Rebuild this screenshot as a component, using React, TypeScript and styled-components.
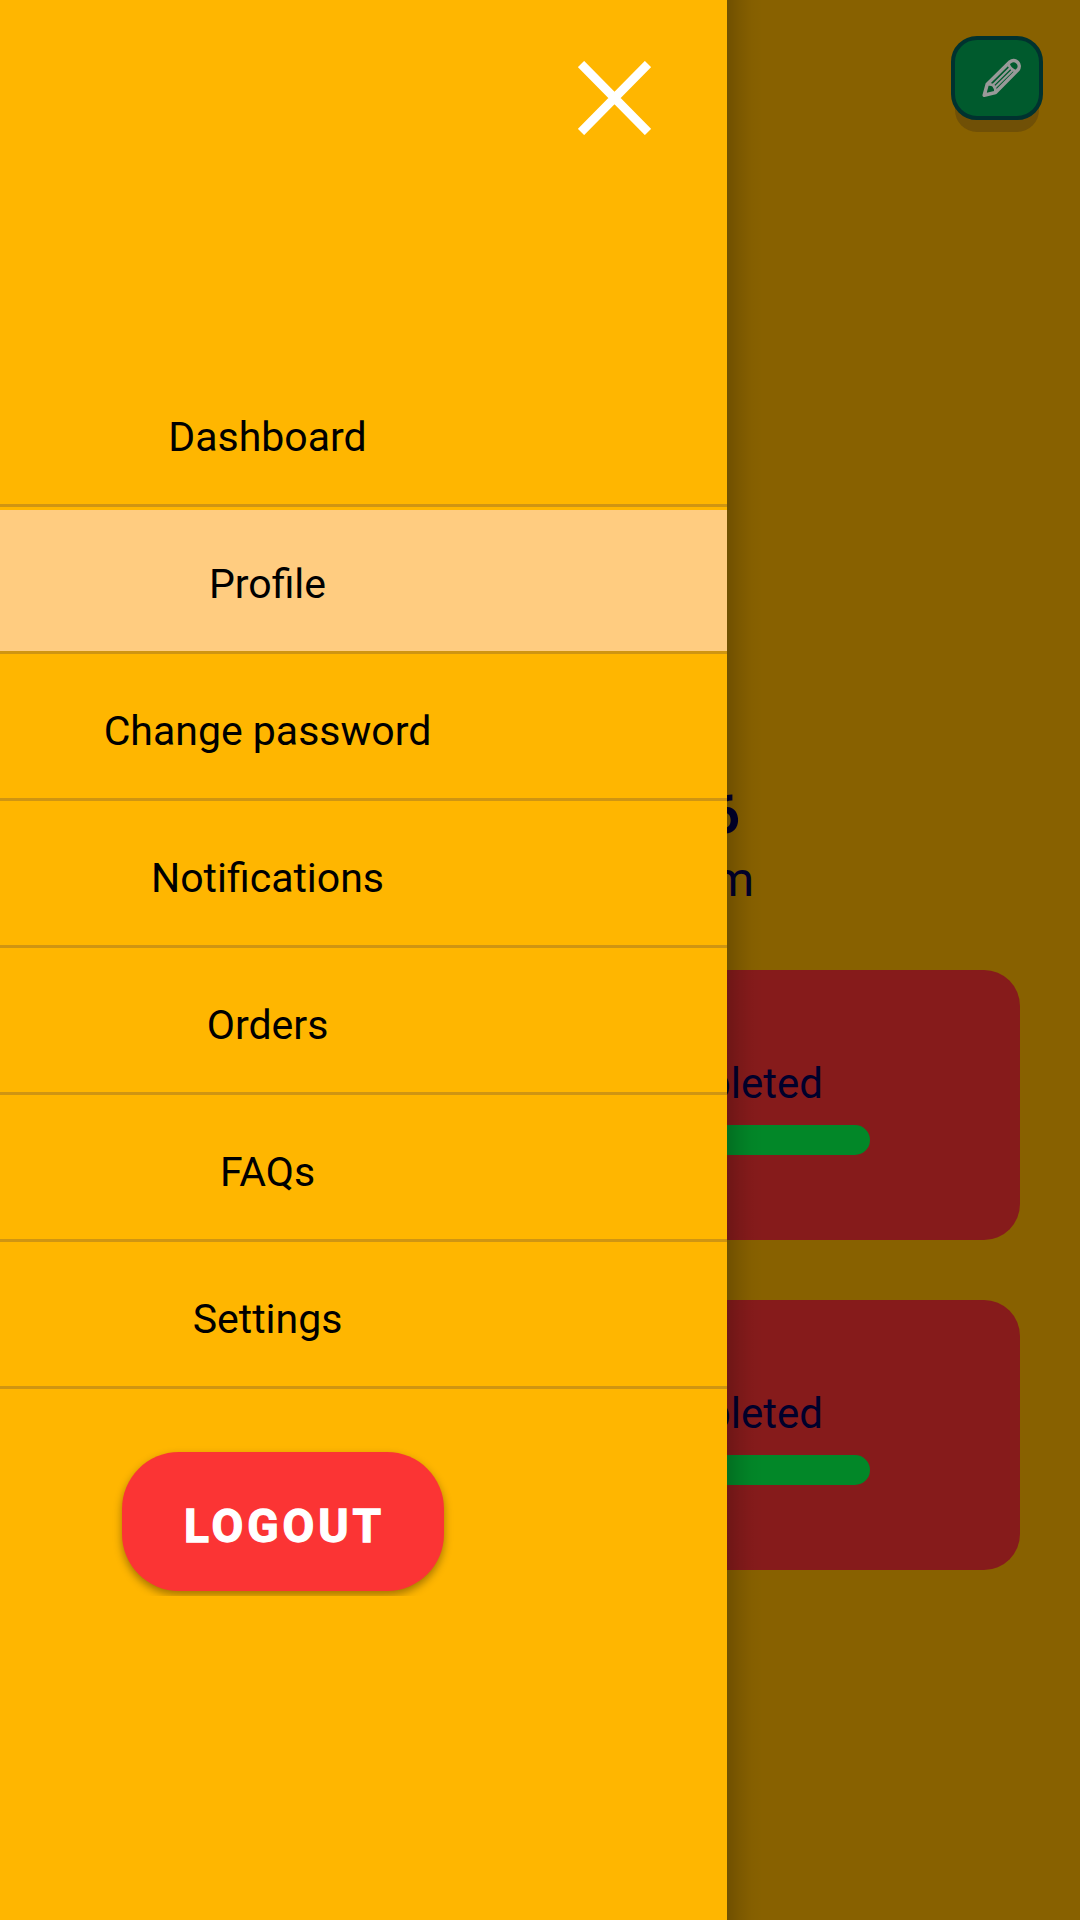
import React from "react";
import styled, { createGlobalStyle } from "styled-components";

const GlobalStyle = createGlobalStyle`
  * { box-sizing: border-box; }
  body { margin: 0; background: #886100; font-family: Roboto, "Liberation Sans", sans-serif; }
  button { font-family: inherit; border: 0; padding: 0; cursor: pointer; }
`;

const Screen = styled.div`
  position: relative;
  width: 1080px;
  height: 1920px;
  overflow: hidden;
  background: #886100;
`;

const Page = styled.main`
  display: flex;
  flex-direction: column;
  height: 100%;
  padding: 36px 37px 0 60px;
  color: #00002b;
`;

const EditButton = styled.button`
  align-self: flex-end;
  display: flex;
  align-items: center;
  justify-content: center;
  width: 92px;
  height: 84px;
  padding-left: 9px;
  border: 4px solid #00322f;
  border-radius: 26px;
  background: #005a2d;
  box-shadow: 0 16px 0 -4px #705006;
`;

const Identity = styled.section`
  display: flex;
  flex-direction: column;
  margin-top: 663px;
  height: 187px;
`;

const Name = styled.div`
  width: 680px;
  line-height: 65px;
  font-size: 53px;
  font-weight: 700;
  text-align: right;
`;

const Email = styled.div`
  width: 694px;
  line-height: 64px;
  font-size: 48px;
  text-align: right;
`;

const Cards = styled.section`
  display: flex;
  flex-direction: column;
  gap: 60px;
  width: 960px;
`;

const Card = styled.article`
  height: 270px;
  padding: 89px 150px 0;
  border-radius: 36px;
  background: #861b1b;
`;

const CardLabel = styled.div`
  width: 613px;
  height: 66px;
  line-height: 50px;
  font-size: 42px;
  text-align: right;
`;

const Progress = styled.div`
  height: 30px;
  border-radius: 15px;
  background: #028728;
`;

const Drawer = styled.aside`
  position: absolute;
  inset: 0 auto 0 0;
  display: flex;
  flex-direction: column;
  width: 727px;
  background: #ffb600;

  &::after {
    content: "";
    position: absolute;
    inset: 0 -36px 0 auto;
    width: 36px;
    background: linear-gradient(
      90deg,
      rgba(0, 0, 0, 0.18),
      rgba(0, 0, 0, 0.09) 35%,
      rgba(0, 0, 0, 0.025) 68%,
      transparent
    );
  }
`;

const DrawerHeader = styled.header`
  display: flex;
  justify-content: flex-end;
  height: 360px;
  padding: 61px 76px 0 0;
`;

const CloseButton = styled.button`
  width: 73px;
  height: 74px;
  background: none;
  svg { display: block; }
`;

const Menu = styled.nav`
  display: flex;
  flex-direction: column;
`;

const MenuItem = styled.a<{ $active?: boolean }>`
  display: flex;
  align-items: center;
  justify-content: center;
  height: 144px;
  margin-top: 3px;
  padding: 6px 192px 0 0;
  border-bottom: 3px solid #cf9512;
  background: ${(p) => (p.$active ? "#ffcc80" : "transparent")};
  color: #000;
  font-size: 41px;
`;

const LogoutClip = styled.div`
  width: 360px;
  height: 151px;
  margin: 56px 0 0 102px;
  padding: 7px 18px 0 20px;
  overflow: hidden;
`;

const LogoutButton = styled.button`
  display: flex;
  align-items: center;
  justify-content: center;
  width: 322px;
  height: 139px;
  padding: 8px 0 0 3px;
  border-radius: 57px;
  background: #fb3434;
  box-shadow: 0 4px 8px rgba(0, 0, 0, 0.36);
  color: #fff;
  font-size: 46px;
  font-weight: 700;
  letter-spacing: 4px;
  -webkit-text-stroke: 1.3px #fff;
`;

const items = ["Dashboard", "Profile", "Change password", "Notifications", "Orders", "FAQs", "Settings"];

const PencilIcon = () => (
  <svg width="40" height="40" viewBox="0 0 40 40" fill="none" stroke="#999" strokeWidth="3.5" strokeLinejoin="round">
    <path d="M2.2 37.3 5.2 26.2 28 3.8A5.7 5.7 0 0 1 36 11.8L13.5 34.5Z" />
    <path d="M5.2 26.2Q11.6 26.2 12.2 29 13.6 30 13.5 34.5" strokeWidth="2.8" />
    <path d="M26.3 5.6Q28 11.2 34.2 13.6" strokeWidth="2.8" />
    <path d="M10.6 27.2 28 10M13 29.6 30.4 12.4" strokeWidth="2.1" />
  </svg>
);

const CloseIcon = () => (
  <svg width="73" height="74" viewBox="0 0 73 74" stroke="#fff" strokeWidth="8.8">
    <path d="M3 3 70 71M70 3 3 71" />
  </svg>
);

export default function App() {
  return (
    <Screen>
      <GlobalStyle />
      <Page>
        <EditButton aria-label="Edit"><PencilIcon /></EditButton>
        <Identity>
          <Name>6</Name>
          <Email>m</Email>
        </Identity>
        <Cards>
          {[0, 1].map((id) => (
            <Card key={id}>
              <CardLabel>Completed</CardLabel>
              <Progress />
            </Card>
          ))}
        </Cards>
      </Page>
      <Drawer>
        <DrawerHeader>
          <CloseButton aria-label="Close"><CloseIcon /></CloseButton>
        </DrawerHeader>
        <Menu>
          {items.map((label) => (
            <MenuItem key={label} $active={label === "Profile"}>{label}</MenuItem>
          ))}
        </Menu>
        <LogoutClip>
          <LogoutButton>LOGOUT</LogoutButton>
        </LogoutClip>
      </Drawer>
    </Screen>
  );
}
